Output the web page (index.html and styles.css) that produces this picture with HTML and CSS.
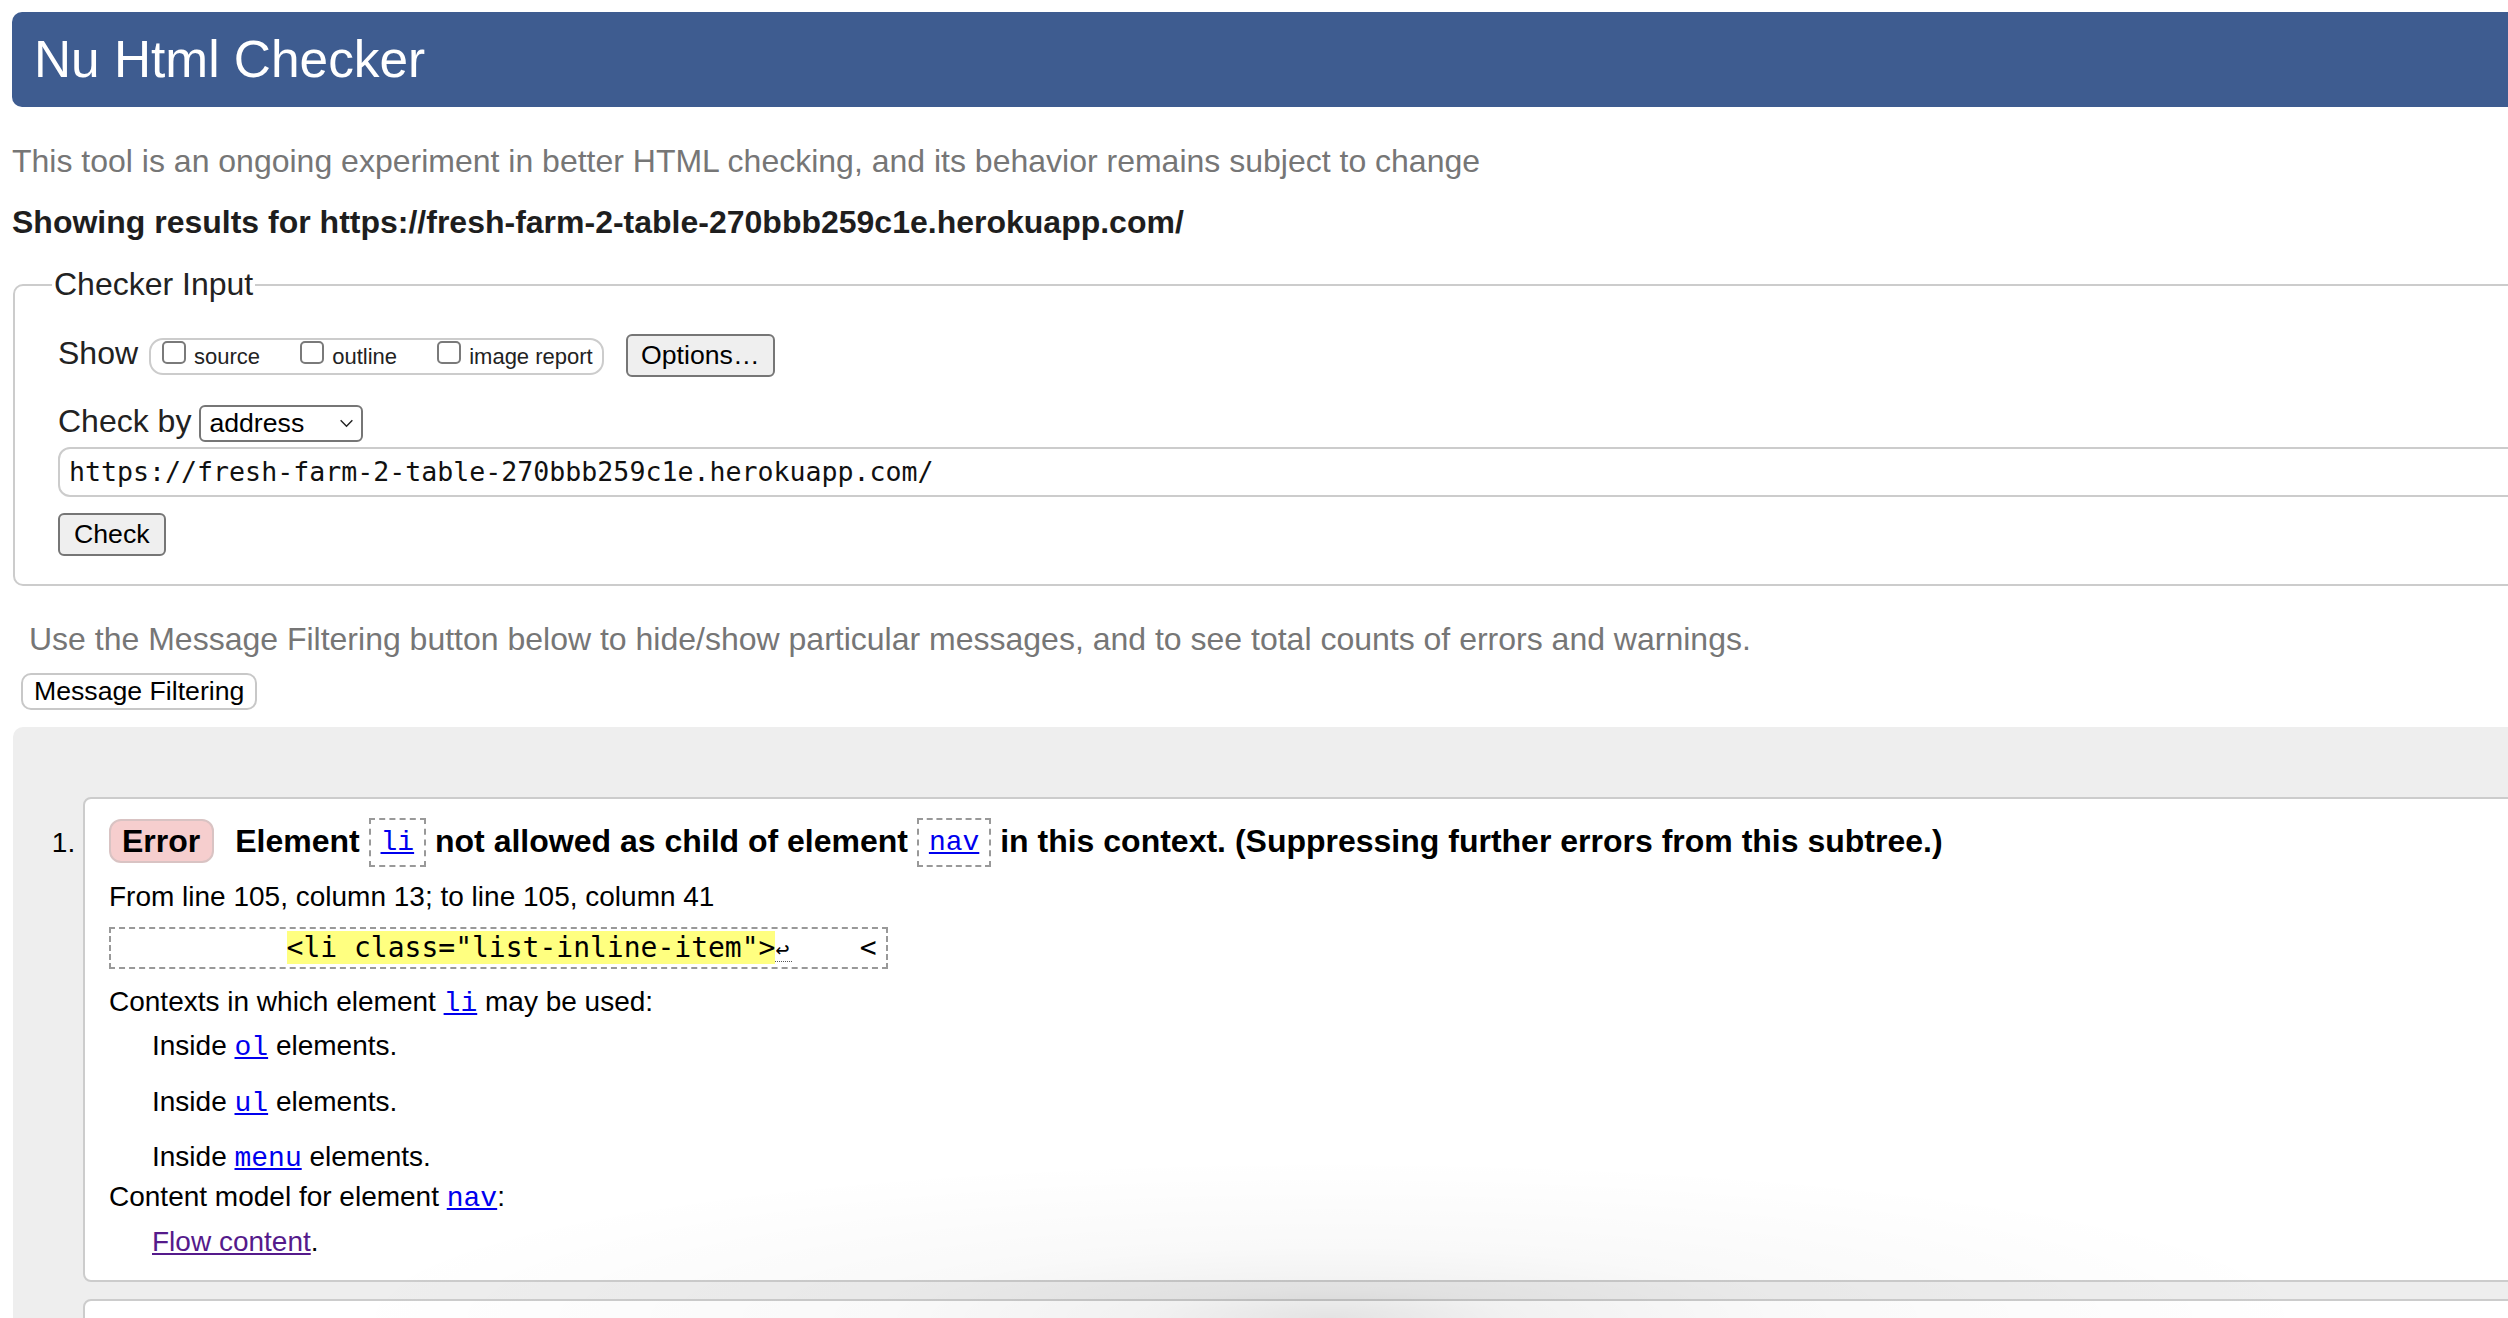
FILE: index.html
```html
<!DOCTYPE html>
<html lang="en">
<head>
<meta charset="utf-8">
<title>Nu Html Checker</title>
<link rel="stylesheet" href="styles.css">
</head>
<body>
<h1 class="masthead">Nu Html Checker</h1>
<p class="intro">This tool is an ongoing experiment in better HTML checking, and its behavior remains subject to change</p>
<p class="showing">Showing results for https://fresh-farm-2-table-270bbb259c1e.herokuapp.com/</p>
<form class="checker">
  <fieldset class="checker-input">
    <legend class="checker-legend">Checker Input</legend>
    <div class="row show-row">
      <span class="row-label">Show</span>
      <div class="show-opts">
        <label class="opt"><span class="cb"></span>source</label>
        <label class="opt"><span class="cb"></span>outline</label>
        <label class="opt"><span class="cb"></span>image report</label>
      </div>
      <button type="button" class="btn btn-options">Options…</button>
    </div>
    <div class="row checkby-row">
      <span class="row-label">Check by</span>
      <div class="select"><span class="select-value">address</span><svg class="chev" width="16" height="10" viewBox="0 0 16 10"><polyline points="1.5,1.5 8,8 14.5,1.5" fill="none" stroke="#222" stroke-width="1.6"/></svg></div>
    </div>
    <div class="url-field">https://fresh-farm-2-table-270bbb259c1e.herokuapp.com/</div>
    <button type="button" class="btn btn-check">Check</button>
  </fieldset>
</form>
<p class="hint">Use the Message Filtering button below to hide/show particular messages, and to see total counts of errors and warnings.</p>
<button type="button" class="filter-btn">Message Filtering</button>
<div class="results">
  <ol class="messages">
    <li class="msg">
      <p class="msg-head"><span class="badge">Error</span> Element <code class="ref"><a href="#">li</a></code> not allowed as child of element <code class="ref"><a href="#">nav</a></code> in this context. (Suppressing further errors from this subtree.)</p>
      <p class="location">From line 105, column 13; to line 105, column 41</p>
      <code class="extract">          <mark class="hl">&lt;li class="list-inline-item"&gt;</mark><span class="lf">↩</span>    &lt;</code>
      <dl class="ctx">
        <dt class="ctx-first">Contexts in which element <a class="el" href="#">li</a> may be used:</dt>
        <dd class="dd-first">Inside <a class="el" href="#">ol</a> elements.</dd>
        <dd class="dd-more">Inside <a class="el" href="#">ul</a> elements.</dd>
        <dd class="dd-more">Inside <a class="el" href="#">menu</a> elements.</dd>
        <dt class="ctx-second">Content model for element <a class="el" href="#">nav</a>:</dt>
        <dd class="dd-flow"><a class="visited" href="#">Flow content</a>.</dd>
      </dl>
    </li>
    <li class="msg msg-next"></li>
  </ol>
</div>
<div class="shade"></div>
</body>
</html>
```
FILE: styles.css
```css
html {
  overflow: hidden;
  background: #fff;
}
body {
  margin: 0;
  padding: 12px 0 0 12px;
  width: 2640px;
  font-family: "Liberation Sans", Arial, Helvetica, sans-serif;
  color: #000;
}
.masthead {
  margin: 0;
  height: 95px;
  line-height: 95px;
  padding-left: 22px;
  background: #3e5c90;
  color: #fff;
  font-size: 51.4px;
  font-weight: normal;
  border-radius: 10px 0 0 10px;
}
.intro {
  margin: 36px 0 0;
  font-size: 32px;
  line-height: 36px;
  color: #767676;
}
.showing {
  margin: 25px 0 0;
  font-size: 32px;
  line-height: 36px;
  font-weight: bold;
  color: #1e1e1e;
}
.checker {
  margin: 0;
}
.checker-input {
  margin: 26px 0 0 1px;
  padding: 31px 0 28px 43px;
  border: 2px solid #cccccc;
  border-radius: 10px;
  min-inline-size: 0;
}
.checker-legend {
  font-size: 32px;
  line-height: 37px;
  padding: 0 2px;
  margin-left: -6px;
  color: #222;
}
.row {
  display: flex;
  align-items: baseline;
}
.row-label {
  font-size: 32px;
  line-height: 37px;
  color: #222;
}
.show-opts {
  margin-left: 11px;
  width: 455px;
  box-sizing: border-box;
  border: 2px solid #cccccc;
  border-radius: 14px;
  padding: 0 10px 0 11px;
  font-size: 22px;
  line-height: 33px;
  color: #222;
  white-space: nowrap;
}
.opt {
  margin-right: 34px;
}
.opt:last-child {
  margin-right: 0;
}
.cb {
  display: inline-block;
  width: 24px;
  height: 23px;
  box-sizing: border-box;
  border: 2px solid #7a7a7a;
  border-radius: 5px;
  margin-right: 8px;
  background: #fff;
}
.btn {
  font-family: "Liberation Sans", Arial, sans-serif;
  font-size: 26.67px;
  height: 43px;
  box-sizing: border-box;
  background: #efefef;
  border: 2px solid #767676;
  border-radius: 6px;
  color: #000;
  padding: 0 13px;
}
.btn-options {
  margin-left: 22px;
}
.checkby-row {
  margin-top: 26px;
}
.select {
  margin-left: 8px;
  width: 164px;
  height: 37px;
  box-sizing: border-box;
  border: 2px solid #767676;
  border-radius: 6px;
  padding: 0 7px 0 8px;
  display: flex;
  align-items: center;
  justify-content: space-between;
  font-size: 26.67px;
  color: #000;
}
.chev {
  display: block;
  width: 15px;
  height: 9px;
}
.url-field {
  margin-top: 5px;
  height: 50px;
  box-sizing: border-box;
  border: 2px solid #cccccc;
  border-radius: 12px;
  padding: 0 9px;
  font-family: "DejaVu Sans Mono", Menlo, monospace;
  font-size: 26.6px;
  line-height: 46px;
  color: #111;
}
.btn-check {
  display: block;
  margin-top: 16px;
  padding: 0 14px;
}
.hint {
  margin: 35px 0 0 17px;
  font-size: 32px;
  line-height: 36px;
  color: #767676;
}
.filter-btn {
  display: block;
  margin: 16px 0 0 9px;
  height: 37px;
  box-sizing: border-box;
  padding: 0 11px;
  background: #fff;
  border: 2px solid #c8c8c8;
  border-radius: 10px;
  font-family: "Liberation Sans", Arial, sans-serif;
  font-size: 26.67px;
  color: #000;
}
.results {
  margin: 17px 0 0 1px;
  padding: 70px 0 0 70px;
  background: #eeeeee;
  border-radius: 10px 0 0 0;
  height: 700px;
}
.messages {
  margin: 0;
  padding: 0;
  list-style: decimal outside;
}
.msg {
  background: #fff;
  border: 2px solid #cccccc;
  border-radius: 8px;
  padding: 17px 24px 22px;
  font-size: 28px;
  line-height: 32px;
}
.msg-next {
  margin-top: 17px;
  height: 120px;
  list-style: none;
}
.msg-head {
  margin: 0;
  font-size: 32px;
  line-height: 50px;
  font-weight: bold;
}
.badge {
  display: inline-block;
  line-height: 40px;
  padding: 0 12px 0 11px;
  background: #f6cece;
  border: 2px solid #d9c3c3;
  border-radius: 12px;
  margin-right: 12px;
}
.ref {
  display: inline-block;
  font-family: "Liberation Mono", "Courier New", monospace;
  font-size: 28px;
  font-weight: normal;
  line-height: 45px;
  padding: 0 10px;
  border: 2px dashed #999;
  vertical-align: 2px;
}
a {
  color: #0000ee;
}
.location {
  margin: 14px 0 0;
}
.extract {
  display: block;
  width: max-content;
  margin-top: 14px;
  padding: 3px 9px 3px 7px;
  border: 2px dashed #999;
  font-family: "DejaVu Sans Mono", Menlo, monospace;
  font-size: 28px;
  line-height: 32px;
  white-space: pre;
  color: #000;
}
.hl {
  background: #ffff80;
  color: #000;
}
.lf {
  display: inline-block;
  width: 16.86px;
  font-size: 23px;
  line-height: 1;
  text-align: left;
  border-bottom: 1px dotted #555;
}
.ctx {
  margin: 0;
}
.ctx-first {
  margin-top: 17px;
}
.dd-first {
  margin: 12px 0 0 43px;
}
.dd-more {
  margin: 23.5px 0 0 43px;
}
.ctx-second {
  margin-top: 8px;
}
.dd-flow {
  margin: 13px 0 0 43px;
}
.el {
  font-family: "Liberation Mono", "Courier New", monospace;
  font-size: 28px;
  line-height: 1;
}
.visited {
  color: #551a8b;
}
.shade {
  position: absolute;
  left: 0;
  top: 1128px;
  width: 2508px;
  height: 190px;
  pointer-events: none;
  background: radial-gradient(ellipse 1000px 160px at 1330px 100%, rgba(0,0,0,0.11) 0%, rgba(0,0,0,0.055) 18%, rgba(0,0,0,0.025) 45%, rgba(0,0,0,0) 100%);
}
```
